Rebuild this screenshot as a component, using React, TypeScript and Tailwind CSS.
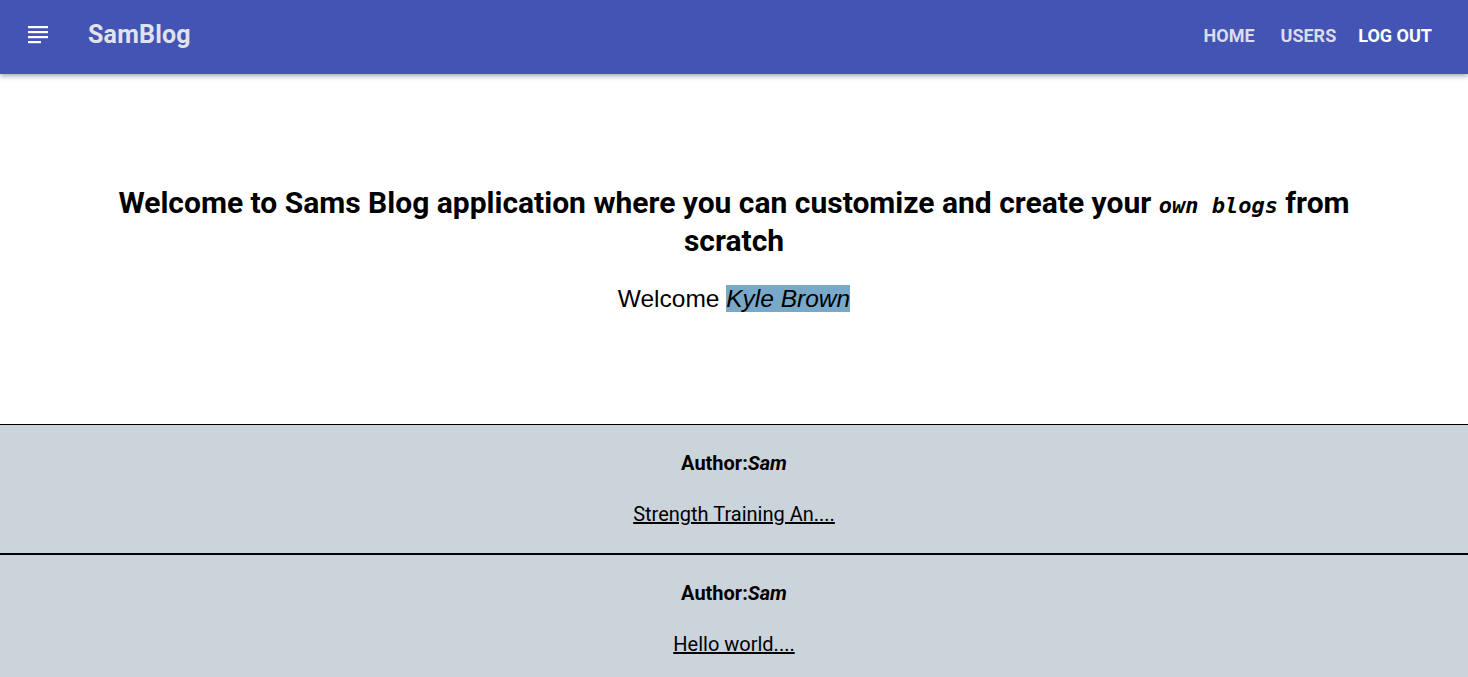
import React from "react";

const posts = [
  { author: "Sam", title: "Strength Training An...." },
  { author: "Sam", title: "Hello world...." },
];

const App = () => {
  return (
    <div className="min-h-screen bg-white font-['Roboto',sans-serif] text-black">
      {/* App bar */}
      <header className="relative z-10 flex h-[74px] items-center bg-[#4454b4] px-[28px] pb-[4px] shadow-[0_2px_5px_rgba(0,0,0,0.35)]">
        <svg width="20" height="18" viewBox="0 0 20 18" className="mr-[40px] text-white">
          <rect x="0" y="0" width="20" height="2.2" fill="currentColor" />
          <rect x="0" y="5" width="20" height="2.2" fill="currentColor" />
          <rect x="0" y="10" width="20" height="2.2" fill="currentColor" />
          <rect x="0" y="15" width="13" height="2.2" fill="currentColor" />
        </svg>
        <h1 className="text-[25px] font-bold tracking-[0.2px] text-[#e2e2ea]">SamBlog</h1>
        <nav className="ml-auto flex items-center pr-[8px] text-[18px] font-bold uppercase">
          <a className="mr-[26px] text-[#dcdcea]">Home</a>
          <a className="mr-[22px] text-[#dcdcea]">Users</a>
          <a className="text-white">Log out</a>
        </nav>
      </header>

      {/* Hero */}
      <section className="px-[100px] pt-[110px] pb-[110px] text-center">
        <h2 className="text-[30px] font-bold leading-[38px]">
          Welcome to Sams Blog application where you can customize and create your{" "}
          <code className="font-['DejaVu_Sans_Mono',monospace] text-[22px] leading-none italic">own blogs</code>{" "}
          from scratch
        </h2>
        <p className="mt-[24px] font-['Liberation_Sans',sans-serif] text-[24.5px] leading-[30px]">
          Welcome <em className="bg-[#79a9c9]">Kyle Brown</em>
        </p>
      </section>

      {/* Posts */}
      <div className="border-t border-black bg-[#cbd3db]">
        {posts.map((p, i) => (
          <div key={i} className="border-b-2 border-black pt-[26px] pb-[25px] text-center">
            <p className="text-[20px] font-bold leading-[24px]">
              Author:<i>{p.author}</i>
            </p>
            <a href="#" className="mt-[27px] inline-block text-[20px] leading-[24px] underline">
              {p.title}
            </a>
          </div>
        ))}
      </div>
    </div>
  );
};

export default App;
